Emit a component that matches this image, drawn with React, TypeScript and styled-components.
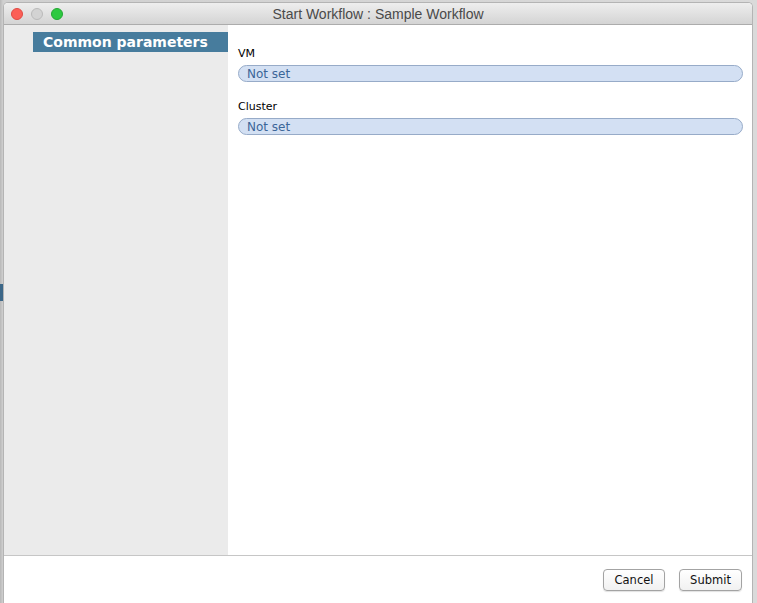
import styled, { createGlobalStyle } from "styled-components";

const GlobalStyle = createGlobalStyle`
  html, body {
    margin: 0;
    padding: 0;
    background: #c4c4c4;
    overflow: hidden;
  }
  * { box-sizing: border-box; }
`;

const Desktop = styled.div`
  display: flex;
  width: 757px;
  height: 603px;
  background: linear-gradient(90deg, #b8b8b8 0px, #d0d0d0 3px, #dadada 100%);
  overflow: hidden;
`;

const BackEdge = styled.div`
  flex: 0 0 3px;
  padding-top: 284px;
`;

const BackMarker = styled.div`
  height: 17px;
  background: #3c6788;
`;

const Window = styled.div`
  margin-top: 2px;
  width: 750px;
  height: 620px;
  display: flex;
  flex-direction: column;
  background: #fff;
  border: 1px solid #b4b4b4;
  border-bottom: none;
  border-radius: 5px 5px 0 0;
  overflow: hidden;
  font-family: "DejaVu Sans", "Liberation Sans", sans-serif;
`;

const TitleBar = styled.div`
  position: relative;
  flex: 0 0 22px;
  display: flex;
  align-items: center;
  justify-content: center;
  background: linear-gradient(#eeeeee, #d4d4d4);
  border-bottom: 1px solid #acacac;
`;

const Lights = styled.div`
  position: absolute;
  left: 7px;
  top: 5px;
  display: flex;
  gap: 8px;
`;

const Light = styled.span<{ $fill: string; $edge: string }>`
  width: 12px;
  height: 12px;
  border-radius: 50%;
  background: ${(p) => p.$fill};
  border: 1px solid ${(p) => p.$edge};
`;

const Title = styled.div`
  font-family: "Liberation Sans", Arial, sans-serif;
  font-size: 14px;
  color: #4a4a4a;
`;

const Body = styled.div`
  flex: 0 0 530px;
  display: flex;
`;

const Sidebar = styled.div`
  flex: 0 0 224px;
  background: #ebebeb;
  padding: 7px 0 0 29px;
`;

const SectionTab = styled.div`
  height: 20px;
  display: flex;
  align-items: center;
  padding-left: 10px;
  background: #477c9d;
  color: #fff;
  font-weight: bold;
  font-size: 14px;
`;

const Main = styled.div`
  flex: 1;
  padding: 22px 9px 0 10px;
`;

const Field = styled.div`
  margin-bottom: 18px;
`;

const Label = styled.div`
  font-size: 11px;
  line-height: 14px;
  color: #000;
  margin-bottom: 4px;
`;

const Pill = styled.div`
  height: 17px;
  display: flex;
  align-items: center;
  padding-left: 8px;
  border: 1px solid #97abc8;
  border-radius: 9px;
  background: #d3e0f3;
  color: #3c6698;
  font-size: 12px;
`;

const Footer = styled.div`
  flex: 1;
  display: flex;
  justify-content: flex-end;
  align-items: flex-start;
  gap: 14px;
  padding: 13px 10px 0 0;
  border-top: 1px solid #c6c6c6;
`;

const Button = styled.button<{ $width: number }>`
  width: ${(p) => p.$width}px;
  height: 22px;
  padding: 0;
  border: 1px solid #a3a3a3;
  border-radius: 4px;
  background: linear-gradient(#ffffff, #f1f1f1);
  box-shadow: 0 1px 1px rgba(0, 0, 0, 0.12);
  font-family: "DejaVu Sans", "Liberation Sans", sans-serif;
  font-size: 11.5px;
  color: #111;
`;

export default function App() {
  return (
    <>
      <GlobalStyle />
      <Desktop>
        <BackEdge>
          <BackMarker />
        </BackEdge>
        <Window>
          <TitleBar>
            <Lights>
              <Light $fill="#fc5f57" $edge="#df4a43" />
              <Light $fill="#d3d3d3" $edge="#bababa" />
              <Light $fill="#2dc940" $edge="#23a733" />
            </Lights>
            <Title>Start Workflow : Sample Workflow</Title>
          </TitleBar>
          <Body>
            <Sidebar>
              <SectionTab>Common parameters</SectionTab>
            </Sidebar>
            <Main>
              <Field>
                <Label>VM</Label>
                <Pill>Not set</Pill>
              </Field>
              <Field>
                <Label>Cluster</Label>
                <Pill>Not set</Pill>
              </Field>
            </Main>
          </Body>
          <Footer>
            <Button $width={62}>Cancel</Button>
            <Button $width={63}>Submit</Button>
          </Footer>
        </Window>
      </Desktop>
    </>
  );
}
